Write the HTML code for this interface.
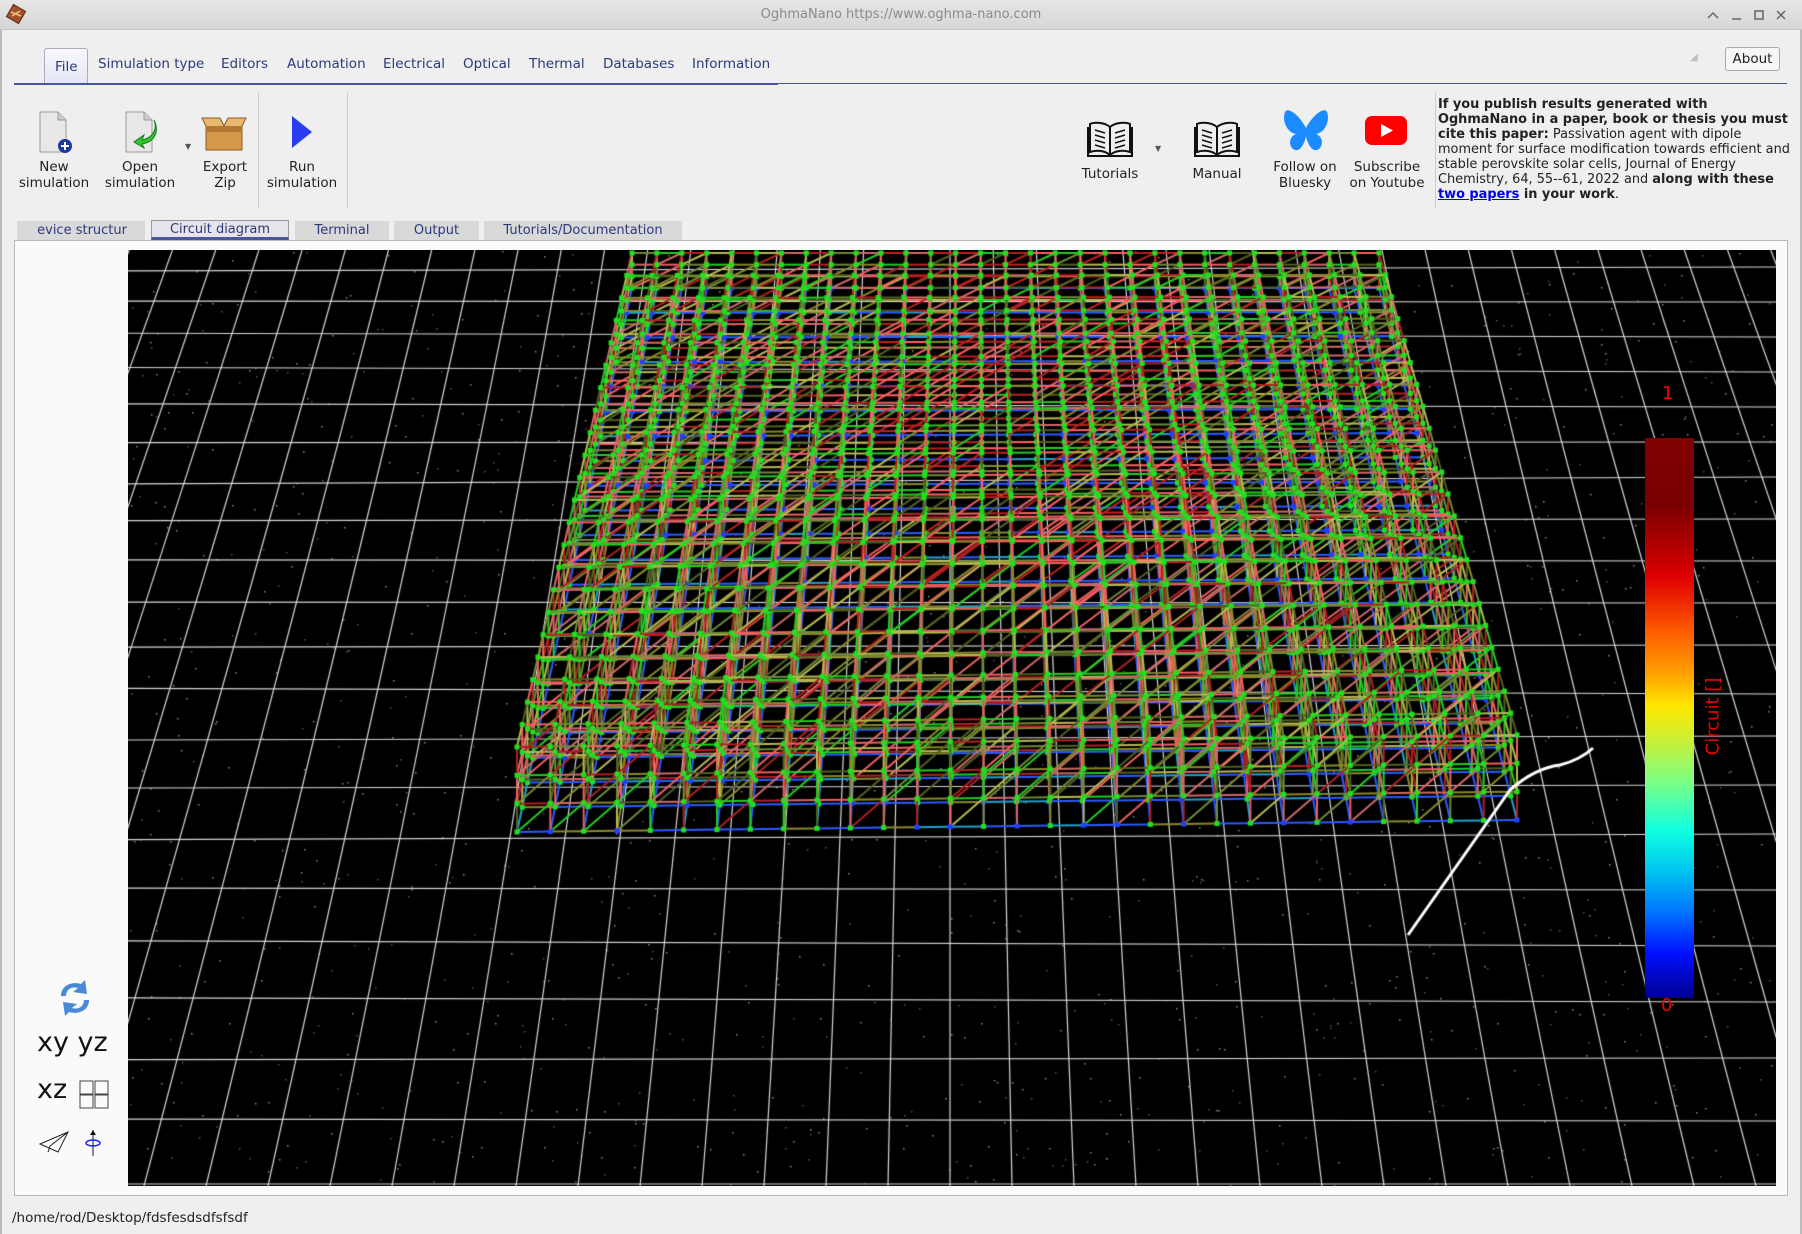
<!DOCTYPE html>
<html><head><meta charset="utf-8"><style>
*{margin:0;padding:0;box-sizing:border-box}
body{width:1802px;height:1234px;background:#efefef;font-family:"DejaVu Sans","Liberation Sans",sans-serif;position:relative;overflow:hidden;color:#222}
.abs{position:absolute}
#title{left:0;top:0;width:1802px;height:30px;background:linear-gradient(#e6e6e6,#d6d6d6);border-bottom:1px solid #c8c8c8}
#title .t{left:0;width:1802px;top:7px;text-align:center;font-size:13px;color:#8a8a8a}
.menu{top:56px;font-size:13.5px;color:#2d3a78}
#filetab{left:44px;top:48px;width:44px;height:36px;border:1px solid #aab;border-bottom:none;background:linear-gradient(#f8f8ff,#e4e6f4);border-radius:3px 3px 0 0}
.tl{font-size:13.5px;text-align:center;line-height:15.5px;color:#222}
.sub{top:221px;height:20px;background:#d9d9d9;font-size:13px;color:#2d3a78;text-align:center;line-height:20px}
.cite{left:1438px;top:97px;width:352px;font-size:12.9px;line-height:15px;color:#222}
</style></head><body>
<div id="title" class="abs">
 <svg class="abs" style="left:6px;top:4px" width="22" height="20"><rect x="3" y="3" width="14" height="14" transform="rotate(30 10 10)" fill="#a0522d" stroke="#5a2a10"/><path d="M5 8 L15 12 M6 12 L14 7" stroke="#f0c080" stroke-width="1.5"/></svg>
 <div class="abs t">OghmaNano https://www.oghma-nano.com</div>
 <svg class="abs" style="left:1705px;top:8px" width="90" height="14" stroke="#666" stroke-width="1.5" fill="none"><path d="M3 10 L8 5 L13 10"/><path d="M27 11 H36"/><rect x="50" y="3" width="8" height="8"/><path d="M72 3 L80 11 M80 3 L72 11"/></svg>
</div>
<div class="abs" style="left:0;top:30px;width:2px;height:1204px;background:#bbb"></div>
<div class="abs" style="right:0;top:30px;width:2px;height:1204px;background:#bbb"></div>

<div id="filetab" class="abs"></div>
<div class="abs menu" style="left:55px;top:59px">File</div>
<div class="abs menu" style="left:98px">Simulation type</div>
<div class="abs menu" style="left:221px">Editors</div>
<div class="abs menu" style="left:287px">Automation</div>
<div class="abs menu" style="left:383px">Electrical</div>
<div class="abs menu" style="left:463px">Optical</div>
<div class="abs menu" style="left:529px">Thermal</div>
<div class="abs menu" style="left:603px">Databases</div>
<div class="abs menu" style="left:692px">Information</div>
<div class="abs" style="left:14px;top:83px;width:764px;height:2px;background:#4a56a0"></div>
<div class="abs" style="left:778px;top:83px;width:1009px;height:1px;background:#4a56a0"></div>
<div class="abs" style="left:1690px;top:52px;color:#bbb;font-size:10px">◢</div>
<div class="abs" style="left:1725px;top:47px;width:55px;height:24px;border:1px solid #aaa;border-radius:3px;background:#f6f6f6;font-size:13.5px;text-align:center;line-height:22px">About</div>

<svg class="abs" style="left:36px;top:110px" width="40" height="46"><path d="M4 2 H22 L30 10 V42 H4 Z" fill="#e8e8e8" stroke="#999"/><path d="M22 2 V10 H30" fill="#ccc" stroke="#999"/><circle cx="29" cy="36" r="7" fill="#1a3aa0"/><path d="M29 32 V40 M25 36 H33" stroke="#fff" stroke-width="2"/></svg>
<div class="abs tl" style="left:14px;top:160px;width:80px">New<br>simulation</div>
<svg class="abs" style="left:122px;top:110px" width="42" height="46"><path d="M4 2 H22 L30 10 V42 H4 Z" fill="#e8e8e8" stroke="#999"/><path d="M22 2 V10 H30" fill="#ccc" stroke="#999"/><path d="M32 10 C36 20 30 28 20 30 L22 25 L12 32 L22 38 L20 34 C32 32 38 22 32 10Z" fill="#2ec82e" stroke="#197a19"/></svg>
<div class="abs tl" style="left:99px;top:160px;width:82px">Open<br>simulation</div>
<div class="abs" style="left:185px;top:142px;font-size:8px;color:#555">▼</div>
<svg class="abs" style="left:200px;top:112px" width="48" height="42"><path d="M6 14 H42 V38 H6Z" fill="#d49a4a" stroke="#8a5a20"/><path d="M6 14 L2 6 H20 L24 14 M42 14 L46 6 H28 L24 14" fill="#e8b870" stroke="#8a5a20"/><rect x="6" y="14" width="36" height="6" fill="#b07830"/></svg>
<div class="abs tl" style="left:190px;top:160px;width:70px">Export<br>Zip</div>
<div class="abs" style="left:258px;top:93px;width:1px;height:115px;background:#ccc"></div>
<svg class="abs" style="left:288px;top:114px" width="28" height="36"><path d="M4 2 L24 18 L4 34Z" fill="#2a3cf0"/></svg>
<div class="abs tl" style="left:261px;top:160px;width:82px">Run<br>simulation</div>
<div class="abs" style="left:347px;top:93px;width:1px;height:115px;background:#ccc"></div>

<svg class="abs" style="left:1086px;top:119px" width="48" height="40" fill="none" stroke="#111" stroke-width="2"><path d="M24 8 C18 3 8 3 4 5 V33 C10 31 18 31 24 36 C30 31 38 31 44 33 V5 C40 3 30 3 24 8Z M24 8 V36"/><path d="M2 8 V37 H46 V8" /><path d="M9 11 L19 14 M9 16 L19 19 M9 21 L19 24 M9 26 L19 29 M29 14 L39 11 M29 19 L39 16 M29 24 L39 21 M29 29 L39 26" stroke-width="1.5"/></svg>
<div class="abs" style="left:1155px;top:144px;font-size:8px;color:#555">▼</div>
<div class="abs tl" style="left:1070px;top:167px;width:80px">Tutorials</div>
<svg class="abs" style="left:1193px;top:119px" width="48" height="40" fill="none" stroke="#111" stroke-width="2"><path d="M24 8 C18 3 8 3 4 5 V33 C10 31 18 31 24 36 C30 31 38 31 44 33 V5 C40 3 30 3 24 8Z M24 8 V36"/><path d="M2 8 V37 H46 V8" /><path d="M9 11 L19 14 M9 16 L19 19 M9 21 L19 24 M9 26 L19 29 M29 14 L39 11 M29 19 L39 16 M29 24 L39 21 M29 29 L39 26" stroke-width="1.5"/></svg>
<div class="abs tl" style="left:1177px;top:167px;width:80px">Manual</div>
<svg class="abs" style="left:1282px;top:108px" width="48" height="50"><path d="M24 20 C18 8 6 -2 3 4 C0 12 4 24 14 26 C4 30 8 44 16 42 C20 40 23 34 24 28 C25 34 28 40 32 42 C40 44 44 30 34 26 C44 24 48 12 45 4 C42 -2 30 8 24 20Z" fill="#1a8cff"/></svg>
<div class="abs tl" style="left:1265px;top:160px;width:80px">Follow on<br>Bluesky</div>
<svg class="abs" style="left:1364px;top:115px" width="44" height="32"><rect x="1" y="1" width="42" height="29" rx="7" fill="#f00"/><path d="M17 9 L29 15.5 L17 22Z" fill="#fff"/></svg>
<div class="abs tl" style="left:1347px;top:160px;width:80px">Subscribe<br>on Youtube</div>
<div class="abs" style="left:1435px;top:93px;width:1px;height:115px;background:#ccc"></div>
<div class="abs cite"><b>If you publish results generated with OghmaNano in a paper, book or thesis you must cite this paper:</b> Passivation agent with dipole moment for surface modification towards efficient and stable perovskite solar cells, Journal of Energy Chemistry, 64, 55--61, 2022 and <b>along with these <u style="color:#00e">two papers</u> in your work</b>.</div>

<div class="abs sub" style="left:17px;width:128px;text-align:right;padding-right:18px">evice structur</div>
<div class="abs sub" style="left:151px;width:138px;top:220px;background:#e4e4ea;border:1px solid #999;border-bottom:3px solid #4a56a0;line-height:17px">Circuit diagram</div>
<div class="abs sub" style="left:295px;width:94px">Terminal</div>
<div class="abs sub" style="left:394px;width:85px">Output</div>
<div class="abs sub" style="left:484px;width:198px">Tutorials/Documentation</div>

<div class="abs" style="left:14px;top:240px;width:1774px;height:956px;background:#fafafa;border:1px solid #b8b8b8"></div>
<canvas id="c" class="abs" width="1648" height="936" style="left:128px;top:250px"></canvas>

<svg class="abs" style="left:55px;top:978px" width="40" height="40"><path d="M6 18 C6 8 16 3 26 6 L30 2 L32 16 L18 14 L23 10 C16 8 11 12 11 18Z" fill="#4a8ad4"/><path d="M34 22 C34 32 24 37 14 34 L10 38 L8 24 L22 26 L17 30 C24 32 29 28 29 22Z" fill="#4a8ad4"/></svg>
<div class="abs" style="left:37px;top:1027px;font-size:27px;color:#111">xy yz</div>
<div class="abs" style="left:37px;top:1074px;font-size:27px;color:#111">xz</div>
<svg class="abs" style="left:79px;top:1080px" width="31" height="29" fill="none" stroke="#444"><rect x="1" y="1" width="13" height="13"/><rect x="16" y="1" width="13" height="13"/><rect x="1" y="15" width="13" height="13"/><rect x="16" y="15" width="13" height="13"/></svg>
<svg class="abs" style="left:38px;top:1130px" width="32" height="24" fill="none" stroke="#222"><path d="M2 14 L30 2 L20 22 Z M30 2 L12 16 L10 22"/></svg>
<svg class="abs" style="left:82px;top:1128px" width="22" height="30"><path d="M11 2 V28" stroke="#111"/><path d="M8 7 L11 2 L14 7" fill="#111"/><ellipse cx="11" cy="15" rx="7" ry="3" fill="none" stroke="#22f" stroke-width="1.5"/></svg>

<div class="abs" style="left:1645px;top:438px;width:49px;height:560px;background:linear-gradient(#800000 0%,#7a0000 12%,#e00000 25%,#ff6000 35%,#ffa000 42%,#ffe800 48%,#c0f040 55%,#80ff80 61%,#10ffe0 70%,#00c8f0 77%,#0070ff 85%,#0010ff 92%,#000090 100%)"></div>
<div class="abs" style="left:1662px;top:383px;color:#e00;font-size:18px">1</div>
<div class="abs" style="left:1661px;top:995px;color:#e00;font-size:18px">0</div>
<div class="abs" style="left:1663px;top:706px;color:#e00;font-size:18px;transform:rotate(-90deg);transform-origin:center;width:100px;text-align:center">Circuit []</div>

<div class="abs" style="left:12px;top:1210px;font-size:13.5px;color:#222">/home/rod/Desktop/fdsfesdsdfsfsdf</div>

<script>
var c=document.getElementById('c'),g=c.getContext('2d');
var W=1648,H=936,OX=128,OY=250;
g.fillStyle='#000';g.fillRect(0,0,W,H);
var s=12345;function R(){s=(s*1103515245+12345)%2147483648;return s/2147483648;}
for(var i=0;i<1400;i++){g.fillStyle=R()<0.5?'#555':'#888';g.fillRect(R()*W|0,R()*H|0,1.5,1.5);}
g.strokeStyle='#d8d8d8';g.lineWidth=1.2;
var vx=950-OX,vy=-1900-OY;
for(var k=-40;k<=40;k++){var bx=950-OX+k*62;g.beginPath();g.moveTo(bx,H);var t=(0-vy)/(H-vy);g.lineTo(vx+(bx-vx)*t,0);g.stroke();}
var y=H-2;while(y>0){g.beginPath();g.moveTo(0,y+((y%7)-3));g.lineTo(W,y-((y%7)-3));g.stroke();var sp=64*Math.pow((y-vy)/(H-vy),2);y-=sp;}
var BL=[632,253],BR=[1379,253],FL=[517,747],FR=[1517,735];
function P(u,v,w){var x=(1-v)*(BL[0]+u*(BR[0]-BL[0]))+v*(FL[0]+u*(FR[0]-FL[0]));
var yy=(1-v)*(BL[1]+u*(BR[1]-BL[1]))+v*(FL[1]+u*(FR[1]-FL[1]));yy+=(1-w)*(35+50*v);return [x-OX,yy-OY];}
var NU=30,NV=22,NW=4;
var pal=['#22cc22','#8a8a28','#b8b850','#f06060','#b02020','#708a38','#d06868','#506020'];
function col(u,v,w){if(w==0)return R()<0.7?'#2a5cff':(R()<0.5?'#20a0d0':'#8a8a30');
var r=R(),cen=Math.abs(u-0.5)<0.2&&v<0.6;if(cen&&r<0.35)return R()<0.5?'#c02020':'#ff6060';
return pal[(R()*pal.length)|0];}
function L(a,b,cl){g.strokeStyle=cl;g.beginPath();g.moveTo(a[0],a[1]);g.lineTo(b[0],b[1]);g.stroke();}
g.lineWidth=2;
for(var j=0;j<=NV;j++){var v=j/NV;for(var l=0;l<NW;l++){var w=l/(NW-1);
for(var i=0;i<=NU;i++){var u=i/NU;var p=P(u,v,w);
if(i<NU)L(p,P((i+1)/NU,v,w),col(u,v,l));
if(j<NV)L(p,P(u,(j+1)/NV,w),col(u,v,l));
if(l<NW-1){L(p,P(u,v,(l+1)/(NW-1)),col(u,v,l+1));if(i<NU&&R()<0.6)L(p,P((i+1)/NU,v,(l+1)/(NW-1)),col(u,v,l+1));}
}}
for(var l=0;l<NW;l++){var w=l/(NW-1);for(var i=0;i<=NU;i++){var p=P(i/NU,v,w);g.fillStyle=(l==0&&R()<0.4)?'#2040ff':'#20e020';g.fillRect(p[0]-2.5,p[1]-2.5,5,5);}}}
g.strokeStyle='#fff';g.lineWidth=3;g.beginPath();g.moveTo(1408-OX,935-OY);g.lineTo(1510-OX,790-OY);g.quadraticCurveTo(1535-OX,768-OY,1560-OX,765-OY);g.quadraticCurveTo(1580-OX,760-OY,1593-OX,748-OY);g.stroke();
</script>
</body></html>
